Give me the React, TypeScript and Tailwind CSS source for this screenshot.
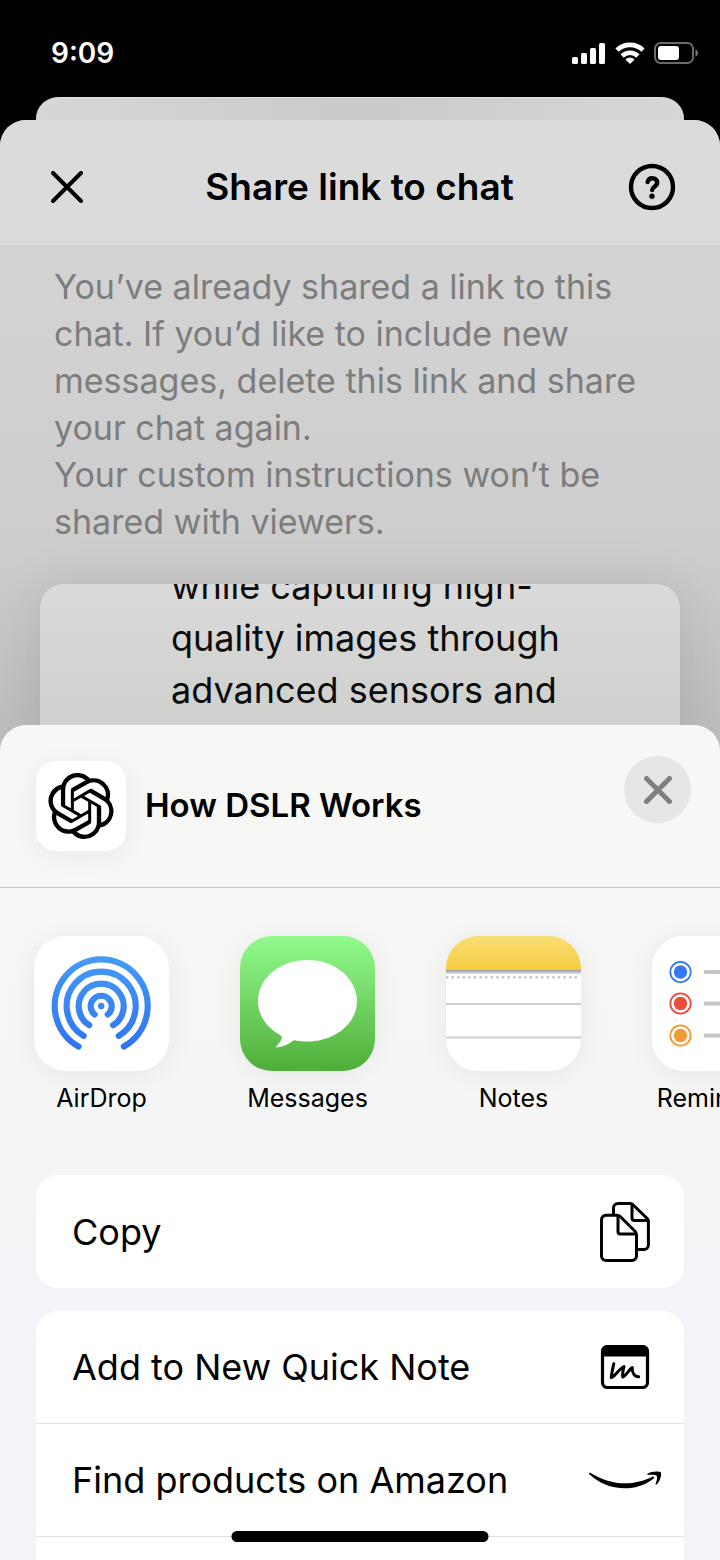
import type { ReactNode } from "react";
import { SiOpenai } from "react-icons/si";

function StatusIcons() {
  return (
    <div className="flex items-center gap-[9px]">
      <svg width="34" height="22" viewBox="0 0 34 22" fill="#fff" aria-hidden="true">
        <rect x="0" y="15" width="6" height="7" rx="1.6" />
        <rect x="9" y="11" width="6" height="11" rx="1.6" />
        <rect x="18" y="6" width="6" height="16" rx="1.6" />
        <rect x="27" y="1" width="6" height="21" rx="1.6" />
      </svg>
      <svg width="30" height="22" viewBox="0 0 30 22" aria-hidden="true">
        <g fill="none" stroke="#fff" strokeWidth="4.6">
          <path d="M2 8.2A18.6 18.6 0 0 1 28 8.2" />
          <path d="M7.1 14A11.2 11.2 0 0 1 22.9 14" />
        </g>
        <path d="M15 22l-4.6-4.6a6.5 6.5 0 0 1 9.2 0z" fill="#fff" />
      </svg>
      <svg width="44" height="22" viewBox="0 0 44 22" aria-hidden="true">
        <rect x="1" y="1" width="38" height="20" rx="5.5" fill="none" stroke="#6b6b6b" strokeWidth="2" />
        <rect x="4" y="4" width="21" height="14" rx="3" fill="#fff" />
        <path d="M41.5 7.5c3.2 1 3.2 6 0 7z" fill="#7a7a7a" />
      </svg>
    </div>
  );
}

function CrossIcon({ size, width, className }: { size: number; width: number; className: string }) {
  return (
    <svg width={size} height={size} viewBox={`0 0 ${size} ${size}`} className={className} aria-hidden="true">
      <path
        d={`M${width / 2} ${width / 2}L${size - width / 2} ${size - width / 2}M${size - width / 2} ${width / 2}L${width / 2} ${size - width / 2}`}
        stroke="currentColor"
        strokeWidth={width}
        strokeLinecap="round"
      />
    </svg>
  );
}

function HelpIcon() {
  return (
    <svg width="48" height="48" viewBox="0 0 48 48" fill="none" stroke="#000" aria-hidden="true">
      <circle cx="24" cy="24" r="21" strokeWidth="4.4" />
      <path
        d="M19.600 19c.7-2.500 2.300-3.700 4.700-3.700 2.900 0 4.900 1.700 4.900 4.300 0 2-1.100 3-2.700 4.100-1.500 1-2.300 1.700-2.300 3.300"
        strokeWidth="4.400"
        strokeLinecap="round"
        strokeLinejoin="round"
      />
      <circle cx="24" cy="33.200" r="2.700" fill="#000" stroke="none" />
    </svg>
  );
}

function AirDropIcon() {
  return (
    <svg width="135" height="135" viewBox="0 0 135 135" fill="none" aria-hidden="true">
      <defs>
        <linearGradient id="airdrop" gradientUnits="userSpaceOnUse" x1="0" y1="20" x2="0" y2="115">
          <stop offset="0" stopColor="#459bf7" />
          <stop offset="1" stopColor="#2f73ec" />
        </linearGradient>
      </defs>
      <rect width="135" height="135" fill="#fff" />
      <g stroke="url(#airdrop)" strokeWidth="6.2" strokeLinecap="round">
        <path d="M44.500 110.500A46.500 46.500 0 1 1 89.900 110.500" />
        <path d="M49.600 99.800A34.500 34.500 0 1 1 84.800 99.800" />
        <path d="M55.200 89.200A22.500 22.500 0 1 1 79.200 89.200" />
        <path d="M60.600 78.400A10.500 10.500 0 1 1 73.800 78.400" />
      </g>
      <circle cx="67.200" cy="70" r="3.200" fill="#3b8af3" />
    </svg>
  );
}

function MessagesIcon() {
  return (
    <svg width="135" height="135" viewBox="0 0 135 135" aria-hidden="true">
      <defs>
        <linearGradient id="messages" x1="0" y1="0" x2="0" y2="1">
          <stop offset="0" stopColor="#92fb8c" />
          <stop offset="1" stopColor="#4fae3a" />
        </linearGradient>
      </defs>
      <rect width="135" height="135" fill="url(#messages)" />
      <path
        d="M67.500 24C40 24 18 42 18 65c0 14 8.500 26.500 22 34 2 1.200 2 2.500 1.200 4.500-1.200 3-3.200 5.300-5.800 8 5.500-.2 12-2.500 16.500-6 1.500-1 2.300-1.400 4-1.100 3.700.8 7.600 1.100 11.600 1.100 27.500 0 49.500-18 49.500-40.500S95 24 67.500 24z"
        fill="#fff"
      />
    </svg>
  );
}

function NotesIcon() {
  return (
    <svg width="135" height="135" viewBox="0 0 135 135" aria-hidden="true">
      <defs>
        <linearGradient id="notes" x1="0" y1="0" x2="0" y2="1">
          <stop offset="0" stopColor="#f9de74" />
          <stop offset="1" stopColor="#f6cc42" />
        </linearGradient>
        <linearGradient id="fold" x1="0" y1="0" x2="0" y2="1">
          <stop offset="0" stopColor="#999" />
          <stop offset="1" stopColor="#e4e4e4" />
        </linearGradient>
      </defs>
      <rect width="135" height="135" fill="#fff" />
      <rect width="135" height="34" fill="url(#notes)" />
      <rect y="34" width="135" height="4" fill="url(#fold)" />
      <path d="M1 41.300H135" stroke="#c4c4c4" strokeWidth="2.800" strokeLinecap="round" strokeDasharray="0 5.600" />
      <path d="M0 68H135M0 101.500H135" stroke="#cfcfd1" strokeWidth="1.800" />
    </svg>
  );
}

function RemindersIcon() {
  const rows = [
    { y: 36, color: "#3478f6" },
    { y: 67.5, color: "#eb4d3d" },
    { y: 99.5, color: "#f19a37" },
  ];
  return (
    <svg width="135" height="135" viewBox="0 0 135 135" aria-hidden="true">
      <rect width="135" height="135" fill="#fff" />
      {rows.map((row) => (
        <g key={row.y}>
          <circle cx="28.500" cy={row.y} r="10.200" fill="none" stroke={row.color} strokeWidth="1.800" />
          <circle cx="28.500" cy={row.y} r="6.700" fill={row.color} />
          <path d={`M53.500 ${row.y}H118`} stroke="#c5c5c9" strokeWidth="3.800" strokeLinecap="round" />
        </g>
      ))}
    </svg>
  );
}

function CopyIcon() {
  return (
    <svg width="50" height="60" viewBox="0 0 50 60" fill="none" stroke="#000" strokeWidth="3" strokeLinejoin="round" aria-hidden="true">
      <path d="M13.500 12V6a4.500 4.500 0 0 1 4.500-4.500H30.500a3 3 0 0 1 2.200 1L47.200 16.500a4 4 0 0 1 1.200 2.800V43a4.500 4.500 0 0 1-4.500 4.500H38" />
      <path d="M32 2V16a2.500 2.500 0 0 0 2.500 2.500H48" />
      <path d="M6 13.300H17a5 5 0 0 1 3.500 1.500L35 29.300a5 5 0 0 1 1.500 3.500V54a4.500 4.500 0 0 1-4.500 4.500H6A4.500 4.500 0 0 1 1.500 54V17.800A4.500 4.500 0 0 1 6 13.300z" />
      <path d="M18 13.500V29.500a2.500 2.500 0 0 0 2.500 2.500H36" />
    </svg>
  );
}

function QuickNoteIcon() {
  return (
    <svg width="50" height="46" viewBox="0 0 50 46" fill="none" aria-hidden="true">
      <rect x="2.500" y="2.500" width="45" height="41" rx="5" stroke="#000" strokeWidth="3.200" />
      <path d="M1.500 12.500V7A6 6 0 0 1 7.500 1H42.500a6 6 0 0 1 6 6V12.500z" fill="#000" />
      <path
        d="M13.800 19.700C12.800 24 11.800 28.500 11.200 33.600C15 32.500 18.500 25.500 24 22.500C23.200 26 22.200 29.500 22.700 33C26.500 31.500 28.500 26 32.200 23.500C32 27.500 33.500 32.500 38.700 32.800"
        stroke="#000"
        strokeWidth="3"
        strokeLinecap="round"
        strokeLinejoin="round"
      />
    </svg>
  );
}

function SmileIcon() {
  return (
    <svg width="74" height="18" viewBox="0 0 74 18" aria-hidden="true">
      <path d="M1 2.500c0-.7.700-1 1.500-.6C14 8.500 25 12.300 37 12.300c9.500 0 19-2.500 27.500-6.600 1.300-.5 2.200.8 1.100 1.700C58 13.800 47 17.300 37 17.300 23 17.300 10.500 11.800 1.300 3.200 1.100 3 1 2.800 1 2.500z" />
      <path d="M59.500 2.700C63-.1 71.500 0 72.700 1.100c1.300 1.400-.4 9.300-4.200 12.400-.8.600-1.300.2-1-.6.900-2.200 2.200-6.900 1.300-8-.9-1.200-5.500-1.100-8.700-1-.9 0-1.100-.7-.6-1.200z" />
    </svg>
  );
}

function AppTile({ label, children }: { label: string; children: ReactNode }) {
  return (
    <button type="button" className="flex w-[135px] shrink-0 flex-col items-center gap-2">
      <span className="overflow-hidden rounded-[32px] shadow-[0_4px_28px_rgba(0,0,0,0.06)]">{children}</span>
      <span className="text-[25px] leading-[38px]">{label}</span>
    </button>
  );
}

function ActionRow({ label, icon }: { label: string; icon?: ReactNode }) {
  return (
    <button type="button" className="flex h-[113px] w-full shrink-0 items-center justify-between pl-9 text-left text-[36px]">
      <span>{label}</span>
      <span className="mr-[22px] flex w-[74px] justify-center">{icon}</span>
    </button>
  );
}

export default function App() {
  return (
    <div className="relative flex h-screen flex-col overflow-hidden bg-black font-['Inter','Liberation_Sans',sans-serif] text-black">
      <div className="flex h-[97px] shrink-0 items-center justify-between pt-2 pr-[22px] pl-[51px] text-white">
        <span className="text-[28px] font-semibold">9:09</span>
        <StatusIcons />
      </div>
      <div className="mx-9 h-[23px] shrink-0 rounded-t-[22px] border-t border-[#e2e2e2] bg-linear-to-r from-[#d7d7d7] via-[#cacaca] to-[#d7d7d7]" />

      <main className="flex min-h-0 flex-1 flex-col overflow-hidden rounded-t-[26px] bg-linear-to-b from-[#d3d3d3] from-10% via-[#cdcdcd] via-30% to-[#b8bab6] to-45%">
        <header className="flex h-[125px] shrink-0 items-center justify-between bg-[#dbdbdb] pt-2 pr-11 pl-[51px]">
          <button type="button" aria-label="Close" className="flex w-10">
            <CrossIcon size={32} width={4} className="text-black" />
          </button>
          <h1 className="text-[37px] font-semibold">Share link to chat</h1>
          <button type="button" aria-label="Help" className="flex">
            <HelpIcon />
          </button>
        </header>

        <p className="shrink-0 px-[54px] pt-[18px] text-[34px] leading-[47px] text-[#7d7d7d]">
          You’ve already shared a link to this
          <br />
          chat. If you’d like to include new
          <br />
          messages, delete this link and share
          <br />
          your chat again.
          <br />
          Your custom instructions won’t be
          <br />
          shared with viewers.
        </p>

        <section className="mx-10 mt-[39px] h-[169px] shrink-0 overflow-hidden rounded-t-[24px] bg-linear-to-b from-[#dadada] to-[#cdcfcb] shadow-[0_0_50px_rgba(0,0,0,0.1)]">
          <p className="-mt-6 pl-[131px] text-[36px] leading-[52px] text-[#0b0b0b]">
            while capturing high-
            <br />
            quality images through
            <br />
            advanced sensors and
          </p>
        </section>

        <section className="relative -mt-7 flex min-h-0 flex-1 flex-col overflow-hidden rounded-t-[26px] bg-linear-to-b from-[#f7f7f6] via-[#f4f5f4] via-50% to-[#f3f3fa] to-75%">
          <div className="flex h-[163px] shrink-0 items-start border-b border-[#c8c8ca] pt-[31px] pr-[29px] pl-9">
            <div className="mt-[5px] flex size-[90px] items-center justify-center rounded-[20px] bg-white shadow-[0_4px_28px_rgba(0,0,0,0.06)]">
              <SiOpenai size={66} aria-hidden="true" />
            </div>
            <h2 className="mt-[29px] ml-[19px] flex-1 text-[33px] leading-[40px] font-semibold">How DSLR Works</h2>
            <button type="button" aria-label="Close share sheet" className="flex size-[67px] items-center justify-center rounded-full bg-[#e6e6e6]">
              <CrossIcon size={28} width={5} className="text-[#7f7f83]" />
            </button>
          </div>

          <div className="flex shrink-0 gap-[71px] overflow-hidden pt-12 pb-[58px] pl-[34px]">
            <AppTile label="AirDrop">
              <AirDropIcon />
            </AppTile>
            <AppTile label="Messages">
              <MessagesIcon />
            </AppTile>
            <AppTile label="Notes">
              <NotesIcon />
            </AppTile>
            <AppTile label="Reminders">
              <RemindersIcon />
            </AppTile>
          </div>

          <div className="mx-9 shrink-0 rounded-[22px] bg-white">
            <ActionRow label="Copy" icon={<CopyIcon />} />
          </div>
          <div className="mx-9 mt-[23px] flex min-h-0 flex-1 flex-col divide-y divide-[#e0e0e2] overflow-hidden rounded-t-[22px] bg-white">
            <ActionRow label="Add to New Quick Note" icon={<QuickNoteIcon />} />
            <ActionRow label="Find products on Amazon" icon={<SmileIcon />} />
            <div className="flex-1" />
          </div>
        </section>
      </main>

      <div className="absolute bottom-[18px] left-1/2 h-[11px] w-[257px] -translate-x-1/2 rounded-full bg-black" />
    </div>
  );
}
